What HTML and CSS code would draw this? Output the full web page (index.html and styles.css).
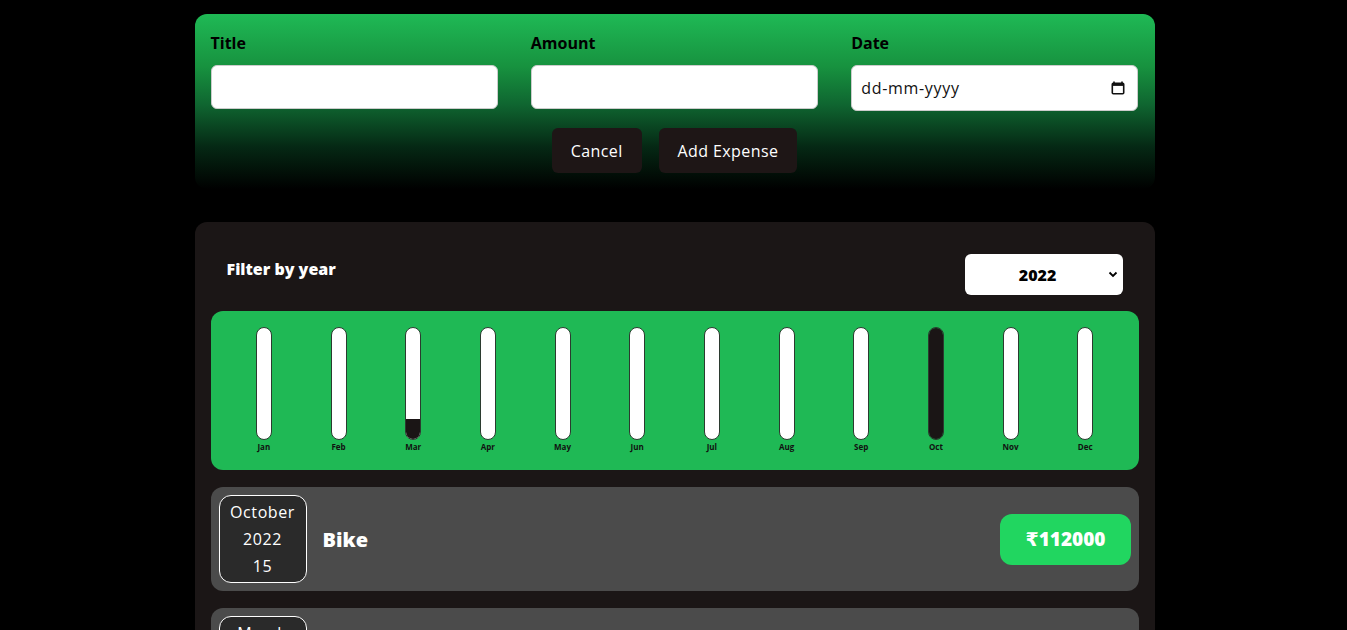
FILE: index.html
```html
<!DOCTYPE html>
<html lang="en">
<head>
<meta charset="utf-8">
<title>Expenses</title>
<link rel="stylesheet" href="styles.css">
</head>
<body>
<div class="app">
  <section class="new-expense">
    <form class="form">
      <div class="controls">
        <div class="control">
          <label>Title</label>
          <input class="field" type="text">
        </div>
        <div class="control">
          <label>Amount</label>
          <input class="field" type="text">
        </div>
        <div class="control">
          <label>Date</label>
          <div class="field date-field">
            <span class="date-ph">dd-mm-yyyy</span>
            <svg class="cal" width="14" height="14" viewBox="0 0 14 14"><path d="M3 0.5v2M11 0.5v2" stroke="#111" stroke-width="1.6"/><rect x="1.3" y="2.3" width="11.4" height="10.4" rx="1" fill="none" stroke="#111" stroke-width="1.6"/><rect x="1.3" y="2.3" width="11.4" height="2.6" fill="#111"/></svg>
          </div>
        </div>
      </div>
      <div class="actions">
        <button type="button" class="btn">Cancel</button>
        <button type="button" class="btn">Add Expense</button>
      </div>
    </form>
  </section>

  <section class="expenses">
    <div class="filter">
      <span class="filter-label">Filter by year</span>
      <div class="select-wrap">
        <select class="year"><option>2022</option></select>
        <svg class="chev" width="10" height="7" viewBox="0 0 10 7"><path d="M1.5 1.5L5 5l3.5-3.5" fill="none" stroke="#000" stroke-width="1.8"/></svg>
      </div>
    </div>

    <div class="chart">
      <div class="col"><div class="bar"><div class="fill" style="height:0%"></div></div><span class="lbl">Jan</span></div>
      <div class="col"><div class="bar"><div class="fill" style="height:0%"></div></div><span class="lbl">Feb</span></div>
      <div class="col"><div class="bar"><div class="fill" style="height:18%"></div></div><span class="lbl">Mar</span></div>
      <div class="col"><div class="bar"><div class="fill" style="height:0%"></div></div><span class="lbl">Apr</span></div>
      <div class="col"><div class="bar"><div class="fill" style="height:0%"></div></div><span class="lbl">May</span></div>
      <div class="col"><div class="bar"><div class="fill" style="height:0%"></div></div><span class="lbl">Jun</span></div>
      <div class="col"><div class="bar"><div class="fill" style="height:0%"></div></div><span class="lbl">Jul</span></div>
      <div class="col"><div class="bar"><div class="fill" style="height:0%"></div></div><span class="lbl">Aug</span></div>
      <div class="col"><div class="bar"><div class="fill" style="height:0%"></div></div><span class="lbl">Sep</span></div>
      <div class="col"><div class="bar"><div class="fill" style="height:100%"></div></div><span class="lbl">Oct</span></div>
      <div class="col"><div class="bar"><div class="fill" style="height:0%"></div></div><span class="lbl">Nov</span></div>
      <div class="col"><div class="bar"><div class="fill" style="height:0%"></div></div><span class="lbl">Dec</span></div>
    </div>

    <ul class="list">
      <li class="item">
        <div class="date"><span>October</span><span>2022</span><span>15</span></div>
        <h2 class="name">Bike</h2>
        <div class="price">₹112000</div>
      </li>
      <li class="item">
        <div class="date"><span>March</span><span>2022</span><span>3</span></div>
        <h2 class="name">Groceries</h2>
        <div class="price">₹2500</div>
      </li>
    </ul>
  </section>
</div>
</body>
</html>
```

FILE: styles.css
```css
* { box-sizing: border-box; }
html, body {
  margin: 0;
  background: #000;
  font-family: "Open Sans", "DejaVu Sans", sans-serif;
  overflow: hidden;
}
.app {
  width: 962px;
  margin: 0 auto;
  padding: 14px 0 0 2px;
}
.new-expense {
  border-radius: 12px;
  padding: 17px 16px 16px;
  background: linear-gradient(180deg, #1fb955 0%, #17923f 30%, #0f6530 52%, #052814 76%, #000 100%);
}
.controls {
  display: flex;
  gap: 33px;
  align-items: flex-start;
}
.control {
  flex: 1;
  display: flex;
  flex-direction: column;
}
.control label {
  font-weight: 700;
  font-size: 16px;
  line-height: 24px;
  color: #000;
  margin-bottom: 10px;
}
.field {
  height: 44px;
  border: 1px solid #ccc;
  border-radius: 6px;
  background: #fff;
  font: inherit;
  padding: 0 10px;
}
.date-field {
  height: 46px;
  display: flex;
  align-items: center;
  justify-content: space-between;
  padding: 0 12px 0 9px;
}
.date-ph {
  font-size: 16px;
  letter-spacing: 0.7px;
  color: #111;
}
.actions {
  display: flex;
  justify-content: center;
  gap: 17px;
  margin-top: 17px;
}
.btn {
  font: inherit;
  font-size: 16px;
  letter-spacing: 0.4px;
  color: #fff;
  background: #1e1616;
  border: none;
  border-radius: 6px;
  height: 45px;
  padding: 0 19px;
}
.expenses {
  margin-top: 33px;
  background: #1b1616;
  border-radius: 12px;
  padding: 16px;
}
.filter {
  display: flex;
  justify-content: space-between;
  align-items: flex-start;
  padding: 0 16px;
  margin: 16px 0;
}
.filter-label {
  color: #fff;
  font-weight: 800;
  font-size: 16px;
  line-height: 30px;
}
.select-wrap {
  position: relative;
  width: 158px;
}
.year {
  appearance: none;
  -webkit-appearance: none;
  width: 100%;
  height: 41px;
  border: none;
  border-radius: 6px;
  background: #fff;
  font: inherit;
  font-weight: 800;
  font-size: 16px;
  text-align: center;
  text-align-last: center;
  color: #000;
  padding: 0 12px 0 0;
}
.chev {
  position: absolute;
  right: 5px;
  top: 17px;
  pointer-events: none;
}
.chart {
  background: #1fb955;
  border-radius: 12px;
  padding: 16px;
  display: flex;
  height: 159px;
}
.col {
  flex: 1;
  display: flex;
  flex-direction: column;
  align-items: center;
}
.bar {
  width: 16px;
  height: 113px;
  background: #fff;
  border: 1px solid #2b3b2f;
  border-radius: 12px;
  overflow: hidden;
  display: flex;
  flex-direction: column;
  justify-content: flex-end;
}
.fill {
  background: #1a1515;
  width: 100%;
}
.lbl {
  font-size: 8px;
  font-weight: 700;
  line-height: 14px;
  color: #111;
}
.list {
  list-style: none;
  margin: 17px 0 0;
  padding: 0;
}
.item {
  display: flex;
  align-items: center;
  background: #4b4b4b;
  border-radius: 12px;
  padding: 8px;
  margin-bottom: 17px;
}
.date {
  width: 88px;
  height: 88px;
  display: flex;
  flex-direction: column;
  align-items: center;
  justify-content: center;
  background: #2a2a2a;
  border: 1px solid #fff;
  border-radius: 12px;
  color: #fff;
  font-size: 16px;
  letter-spacing: 0.6px;
  line-height: 27px;
}
.name {
  flex: 1;
  margin: 0 0 0 16px;
  color: #fff;
  font-size: 20px;
  font-weight: 800;
}
.price {
  background: #21d660;
  color: #fff;
  font-weight: 800;
  font-size: 19px;
  line-height: 27px;
  padding: 12px 25px;
  border-radius: 12px;
}
```
